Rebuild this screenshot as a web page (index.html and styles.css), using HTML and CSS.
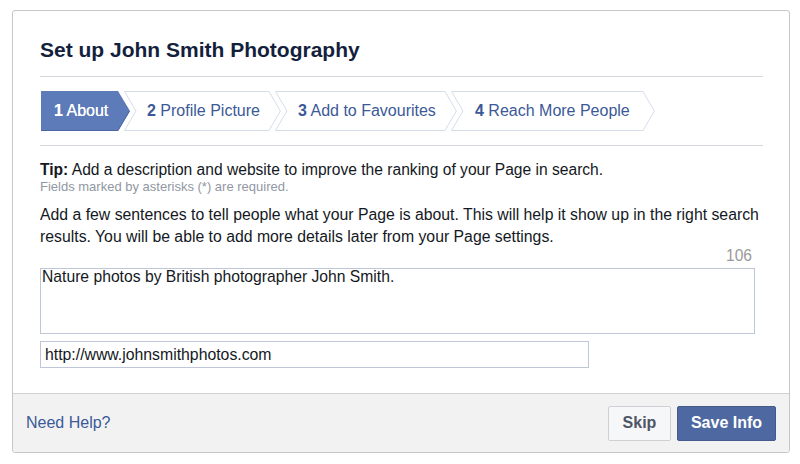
FILE: index.html
```html
<!DOCTYPE html>
<html>
<head>
<meta charset="utf-8">
<link rel="stylesheet" href="styles.css">
</head>
<body>
<div class="page">
  <div class="card">
    <div class="card-body">
      <h1 class="title">Set up John Smith Photography</h1>
      <div class="rule"></div>
      <div class="steps">
        <div class="step step-active w1">
          <svg class="shape" width="89" height="40" viewBox="0 0 89 40"><polygon points="0,0 77,0 89,20 77,40 0,40" fill="#5d7bb9"/><polyline points="0,39.5 77,39.5 88.5,20" fill="none" stroke="#4b67a1" stroke-width="1"/></svg>
          <span class="label"><b>1</b> About</span>
        </div>
        <div class="step w2">
          <svg class="shape" width="157" height="40" viewBox="0 0 157 40"><polygon points="0.5,0.5 145,0.5 156.4,20 145,39.5 0.5,39.5 12,20" fill="#fff" stroke="#d5dcea" stroke-width="1"/></svg>
          <span class="label"><b>2</b> Profile Picture</span>
        </div>
        <div class="step w3">
          <svg class="shape" width="182" height="40" viewBox="0 0 182 40"><polygon points="0.5,0.5 170,0.5 181.4,20 170,39.5 0.5,39.5 12,20" fill="#fff" stroke="#d5dcea" stroke-width="1"/></svg>
          <span class="label"><b>3</b> Add to Favourites</span>
        </div>
        <div class="step w4">
          <svg class="shape" width="204" height="40" viewBox="0 0 204 40"><polygon points="0.5,0.5 192,0.5 203.4,20 192,39.5 0.5,39.5 12,20" fill="#fff" stroke="#d5dcea" stroke-width="1"/></svg>
          <span class="label"><b>4</b> Reach More People</span>
        </div>
      </div>
      <div class="rule rule-2"></div>
      <p class="tip"><b>Tip:</b> Add a description and website to improve the ranking of your Page in search.</p>
      <p class="note">Fields marked by asterisks (*) are required.</p>
      <p class="desc">Add a few sentences to tell people what your Page is about. This will help it show up in the right search results. You will be able to add more details later from your Page settings.</p>
      <div class="counter">106</div>
      <textarea class="about">Nature photos by British photographer John Smith.</textarea>
      <input class="website" type="text" value="http://www.johnsmithphotos.com">
    </div>
    <div class="footer">
      <a class="help">Need Help?</a>
      <div class="actions">
        <button class="btn btn-skip">Skip</button>
        <button class="btn btn-save">Save Info</button>
      </div>
    </div>
  </div>
</div>
</body>
</html>
```
FILE: styles.css
```css
* { box-sizing: border-box; }
html, body { margin: 0; padding: 0; background: #fff; }
body { font-family: "Liberation Sans", Arial, Helvetica, sans-serif; color: #141823; }

.page { padding: 10px 10px 0 12px; }

.card {
  height: 443px;
  border: 1px solid #c6c6c6;
  border-radius: 3px;
  display: flex;
  flex-direction: column;
  overflow: hidden;
}

.card-body {
  flex: 1;
  padding: 27px 26px 0 27px;
  display: flex;
  flex-direction: column;
}

.title {
  margin: 0;
  font-size: 21px;
  line-height: 24px;
  font-weight: bold;
  color: #141f3d;
}

.rule {
  height: 1px;
  background: #d3d6db;
  margin-top: 14px;
}

.steps {
  display: flex;
  height: 40px;
  margin-top: 14px;
  margin-left: 1px;
}

.step {
  position: relative;
  height: 40px;
  flex: none;
  display: flex;
  align-items: center;
  font-size: 16px;
  color: #3b5998;
}
.step + .step { margin-left: -6px; }
.shape { position: absolute; left: 0; top: 0; }
.label { position: relative; white-space: nowrap; }

.w1 { width: 89px; padding-left: 13px; }
.w2 { width: 157px; padding-left: 23px; }
.w3 { width: 182px; padding-left: 23px; }
.w4 { width: 204px; padding-left: 24px; }

.step-active { color: #fff; }
.step-active .label { text-shadow: 0 0 0.5px #fff; }

.tip {
  margin: 14px 0 0;
  font-size: 15.6px;
  line-height: 19px;
}
.note {
  margin: 0;
  font-size: 13px;
  line-height: 15px;
  color: #9197a3;
}
.desc {
  margin: 10px 0 0;
  font-size: 15.8px;
  line-height: 22px;
  margin-right: -6px;
}
.counter {
  text-align: right;
  font-size: 15.6px;
  line-height: 16px;
  color: #9a9a9a;
  margin-right: 11px;
}
.about {
  display: block;
  margin-top: 4px;
  width: 715px;
  height: 66px;
  border: 1px solid #bdc7d8;
  padding: 0 1px;
  font-family: inherit;
  font-size: 15.7px;
  line-height: 16px;
  color: #141823;
  resize: none;
  outline: none;
}
.website {
  display: block;
  margin-top: 7px;
  width: 549px;
  height: 27px;
  border: 1px solid #bdc7d8;
  padding: 0 4px;
  font-family: inherit;
  font-size: 15.8px;
  color: #141823;
  outline: none;
}

.footer {
  height: 59px;
  flex: none;
  border-top: 1px solid #cfd1d5;
  background: #f2f2f2;
  display: flex;
  align-items: center;
  justify-content: space-between;
  padding: 0 13px 0 13px;
}
.help {
  font-size: 16px;
  color: #3b5998;
}
.actions { display: flex; gap: 6px; }
.btn {
  height: 35px;
  font-family: inherit;
  font-size: 16px;
  font-weight: bold;
  border-radius: 2px;
  padding: 0;
  white-space: nowrap;
}
.btn-skip {
  width: 63px;
  background: #f6f7f9;
  border: 1px solid #ced0d4;
  color: #4e5665;
}
.btn-save {
  width: 99px;
  background: #4e69a2;
  border: 1px solid #435a8b;
  color: #fff;
}
```
